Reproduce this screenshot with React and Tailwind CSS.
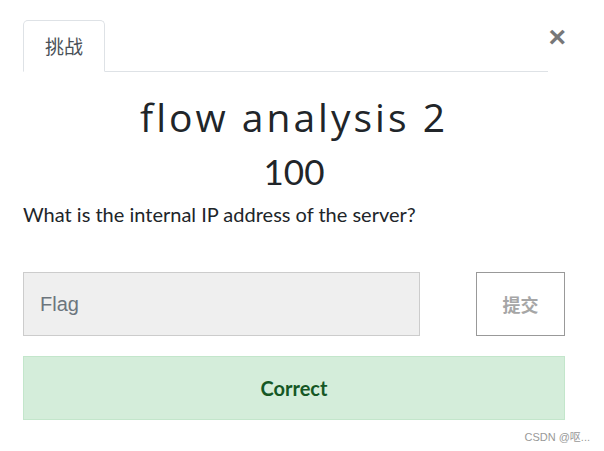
import React from "react";

export default function App() {
  return (
    <div className="w-[604px] h-[451px] bg-white relative font-['Lato','Noto_Sans_CJK_SC',sans-serif] text-[#212529]">
      {/* header with tab + close */}
      <div className="flex items-start pt-5 pl-[23px] pr-[56px]">
        <div className="flex-1 flex border-b border-[#dee2e6]">
          <div className="w-[82px] h-[52px] -mb-px border border-[#dee2e6] border-b-white rounded-t-[5px] bg-white flex items-center justify-center text-[19px] text-[#495057] font-['Noto_Sans_CJK_SC',sans-serif]">
            挑战
          </div>
        </div>
        <button className="absolute right-[38px] top-[22px] text-[30px] leading-none font-bold text-[#777] font-['Liberation_Sans',sans-serif]">
          ×
        </button>
      </div>

      <div className="pl-[23px] pr-[39px]">
        <h1 className="mt-[21px] text-center text-[39px] leading-[48px] tracking-[3px] font-['Open_Sans',sans-serif] text-[#212529]">
          flow analysis 2
        </h1>
        <div className="mt-[9px] text-center text-[35px] leading-[42px]">100</div>
        <p className="mt-[7px] text-[20px] leading-[30px]">What is the internal IP address of the server?</p>

        <div className="mt-[43px] flex justify-between">
          <div className="w-[397px] h-[64px] bg-[#efefef] border border-[#ccc] flex items-center pl-[16px] text-[20px] text-[#6c757d] font-['Liberation_Sans',sans-serif]">
            Flag
          </div>
          <button className="w-[89px] h-[64px] bg-white border border-[#999] text-[18px] font-bold text-[#a6a6a6] font-['Noto_Sans_CJK_SC',sans-serif]">
            提交
          </button>
        </div>

        <div className="mt-[20px] h-[64px] bg-[#d4edda] border border-[#c3e6cb] flex items-center justify-center text-[20px] font-bold text-[#155724]">
          Correct
        </div>
      </div>

      <div className="absolute right-[14px] top-[429px] text-[11px] text-[#999] font-['Liberation_Sans','Noto_Sans_CJK_SC',sans-serif]">
        CSDN @呕...
      </div>
    </div>
  );
}
